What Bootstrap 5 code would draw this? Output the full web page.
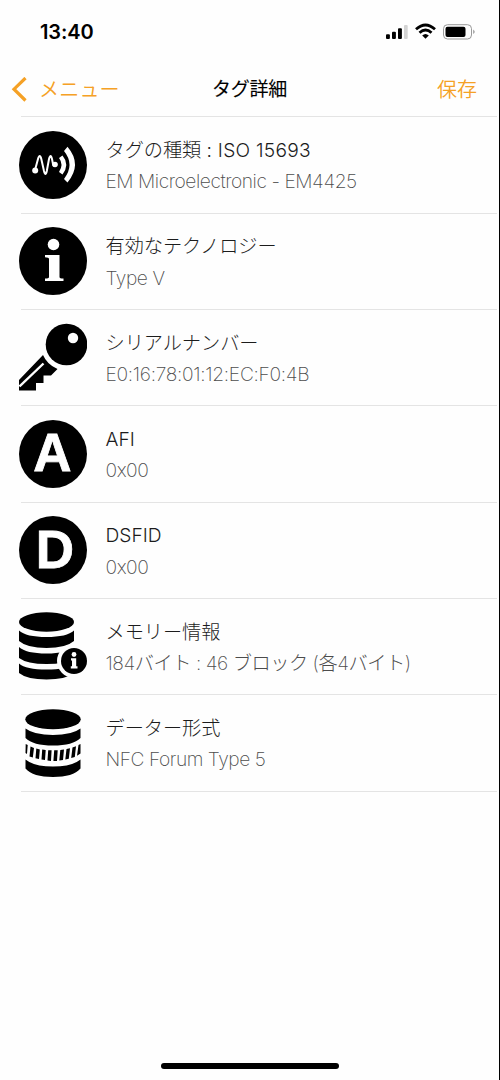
<!DOCTYPE html>
<html lang="ja">
<head>
<meta charset="utf-8">
<meta name="viewport" content="width=device-width, initial-scale=1">
<title>タグ詳細</title>
<link rel="stylesheet" href="https://cdn.jsdelivr.net/npm/bootstrap@5.3.0/dist/css/bootstrap.min.css">
<style>
body{font-family:Inter,"Noto Sans CJK JP",sans-serif;background:#fefefe;color:#000}
.screen{height:1080px;border-right:1px solid #000}
.status{height:62px;padding:2px 22px 0 40px}
.clock{font-size:20px;font-weight:600;letter-spacing:-.1px}
.topbar{height:54.4px;padding:2px 22px 0 11px;display:grid;grid-template-columns:1fr auto 1fr}
.topbar a{color:#f5a125;font-size:20px;font-weight:350}
.topbar .back-label{letter-spacing:.2px}
.heading{font-size:19px;font-weight:400;-webkit-text-stroke:.1px #000;letter-spacing:-.25px;margin-left:11px}
.tagrow{height:96.35px;padding-left:19px}
.tagrow::before{content:"";position:absolute;left:21px;right:2px;top:0;height:1px;background:#e4e4e4}
.tagrow:last-child::after{content:"";position:absolute;left:21px;right:2px;bottom:-1px;height:1px;background:#e4e4e4}
.tagrow>svg{width:68px;height:68px;margin-right:18.5px;flex:none}
.title-line,.info-line{line-height:31.5px;white-space:nowrap;font-size:19.2px}
.title-line{color:#1c1c1c;font-weight:300;letter-spacing:-.05px;padding-top:3.5px}
.title-line .latin{font-weight:350;letter-spacing:0}
.title-line .wide{letter-spacing:.25px}
.info-line{color:#4c4c4c;font-weight:250;letter-spacing:-.45px}
.home{width:178px;height:6px;bottom:11px;left:161px}
</style>
</head>
<body>
<div class="screen position-relative overflow-hidden">
<header>
<div class="status d-flex align-items-center justify-content-between">
<span class="clock">13:40</span>
<svg width="92" height="20" viewBox="0 0 92 20">
<rect x="1" y="12.3" width="3.9" height="4.7" rx="1"/><rect x="7" y="9.8" width="3.9" height="7.2" rx="1"/><rect x="13" y="6.3" width="3.9" height="10.7" rx="1"/><rect x="19" y="3" width="3.7" height="14" rx="1" fill="#d3d3d3"/>
<g fill="none" stroke="#000" stroke-width="2.8"><path d="M31 7.3Q40.5 -1.3 50 7.3"/><path d="M34.5 10.8Q40.5 5.2 46.5 10.8"/></g><path d="M37.2 13.4Q40.5 10.4 43.8 13.4L40.5 16.8Z"/>
<rect x="58.5" y="2.7" width="28" height="14.3" rx="4" fill="none" stroke="#999"/><rect x="60.5" y="4.8" width="20" height="10.2" rx="2"/><path d="M88.2 7.5Q91.2 9.8 88.2 12Z" fill="#999"/>
</svg>
</div>
<nav class="topbar align-items-center">
<a href="#" class="d-flex align-items-center text-decoration-none"><svg width="16" height="26" viewBox="0 0 16 26" class="me-2 pe-1 flex-shrink-0" style="box-sizing:content-box"><path d="M14.5 1L3 12.2L14.5 23.5" fill="none" stroke="#f5a125" stroke-width="3.2"/></svg><span class="back-label">メニュー</span></a>
<span class="heading">タグ詳細</span>
<a href="#" class="text-end text-decoration-none">保存</a>
</nav>
</header>
<main>
<div class="tagrow position-relative d-flex align-items-center">
<svg viewBox="0 0 68 68"><circle cx="34" cy="34" r="34"/><path d="M16 39L19 28Q20.8 22 22.3 28L25 40Q26.5 46 27.8 40L30 28Q31.7 22 33 28L34 33Q35 37 37 33" fill="none" stroke="#fff" stroke-width="2"/><circle cx="16.2" cy="39.5" r="3" fill="#fff"/><circle cx="36" cy="33.5" r="2.8" fill="#fff"/><path d="M43.5 24.5Q51 33.5 43.5 43.5L40 41Q45 33.5 40 27Z" fill="#fff"/><path d="M48.5 15.8Q63.5 33.5 48.5 51.5L45 48Q56 33.5 45 20Z" fill="#fff"/></svg>
<div><div class="title-line">タグの種類 <span class="latin wide">: ISO 15693</span></div><div class="info-line">EM Microelectronic - EM4425</div></div></div>
<div class="tagrow position-relative d-flex align-items-center">
<svg viewBox="0 0 68 68"><circle cx="34" cy="34" r="34"/><g fill="#fff"><circle cx="34.5" cy="17.5" r="5.8"/><path d="M26 28H40.5V50Q40.5 51.5 44.5 51.5V54H26V51.5Q30 51.5 30 50V32Q30 30.3 26 30.3Z"/></g></svg>
<div><div class="title-line">有効なテクノロジー</div><div class="info-line">Type V</div></div></div>
<div class="tagrow position-relative d-flex align-items-center">
<svg viewBox="0 0 68 68"><circle cx="47.5" cy="21.5" r="20.8"/><circle cx="54" cy="15" r="5.2" fill="#fefefe"/><path d="M24 32Q28 41.5 38.5 46L32 52.5H24.5V60H17V67.5H0V57Z"/><path d="M.5 63.5L24.5 40.5" stroke="#fefefe" stroke-width="2.4"/></svg>
<div><div class="title-line">シリアルナンバー</div><div class="info-line" style="letter-spacing:-.3px">E0:16:78:01:12:EC:F0:4B</div></div></div>
<div class="tagrow position-relative d-flex align-items-center">
<svg viewBox="0 0 68 68"><circle cx="34" cy="34" r="34"/><text x="33.5" y="51" text-anchor="middle" font-family="Liberation Sans" font-size="53" font-weight="700" fill="#fff" stroke="#fff" stroke-width=".8">A</text></svg>
<div><div class="title-line"><span class="latin">AFI</span></div><div class="info-line">0x00</div></div></div>
<div class="tagrow position-relative d-flex align-items-center">
<svg viewBox="0 0 68 68"><circle cx="34" cy="34" r="34"/><text x="36" y="52" text-anchor="middle" font-family="Liberation Sans" font-size="53" font-weight="700" fill="#fff" stroke="#fff" stroke-width=".8">D</text></svg>
<div><div class="title-line"><span class="latin">DSFID</span></div><div class="info-line">0x00</div></div></div>
<div class="tagrow position-relative d-flex align-items-center">
<svg viewBox="0 0 68 68"><ellipse cx="27.5" cy="10" rx="27.5" ry="9.7"/><path d="M0 18.5Q7 25 27.5 25T55 18.5V29Q47 36 27.5 36T0 29Z"/><path d="M0 35Q7 41.5 27.5 41.5T55 35V46Q47 52 27.5 52T0 46ZM0 51.5Q7 57.5 27.5 57.5T55 51.5V61Q47 67.5 27.5 67.5T0 61Z"/><circle cx="55" cy="49" r="17" fill="#fefefe"/><circle cx="55" cy="49" r="13"/><g fill="#fff"><circle cx="55" cy="42.5" r="2.4"/><path d="M52 46.3H57.2V54.3H58.5V56.5H51.8V54.3H53V48.5H52Z"/></g></svg>
<div><div class="title-line">メモリー情報</div><div class="info-line">184バイト : 46 ブロック (各4バイト)</div></div></div>
<div class="tagrow position-relative d-flex align-items-center">
<svg viewBox="0 0 68 68"><ellipse cx="34" cy="10.3" rx="27.7" ry="10"/><path d="M6.5 19.5Q15 26 34 26T61.5 19.5V29Q54 36.5 34 36.5T6.5 29ZM6.5 50.5Q15 57.5 34 57.5T61.5 50.5V59.5Q54 68 34 68T6.5 59.5Z"/>
<path d="M6.7 35L8.7 36L8 45L6.5 44ZM11.5 37.5L15 39L13.8 48.5L10.5 47.5ZM17.3 39.5L20.8 40.5L20 50L16.5 49.3ZM23.2 40.6L26.7 41L26 51L22.5 50.5ZM29.2 41.2H32.6L32 52L28.5 51.5ZM35.2 41.3L38.7 41.2L38 51.9L34.4 52ZM41.3 41L45 40.5L44 51L40.3 51.6ZM47.5 40L51 39.3L49.8 49.7L46.3 50.6ZM53.5 38.5L57 37.3L55.8 47.9L52.2 49ZM59.5 36L61.5 35V44.5L58 46.7Z"/></svg>
<div><div class="title-line">データー形式</div><div class="info-line">NFC Forum Type 5</div></div></div>
</main>
<div class="home position-absolute bg-black rounded-pill"></div>
</div>
<script src="https://cdn.jsdelivr.net/npm/bootstrap@5.3.0/dist/js/bootstrap.bundle.min.js"></script>
</body>
</html>
